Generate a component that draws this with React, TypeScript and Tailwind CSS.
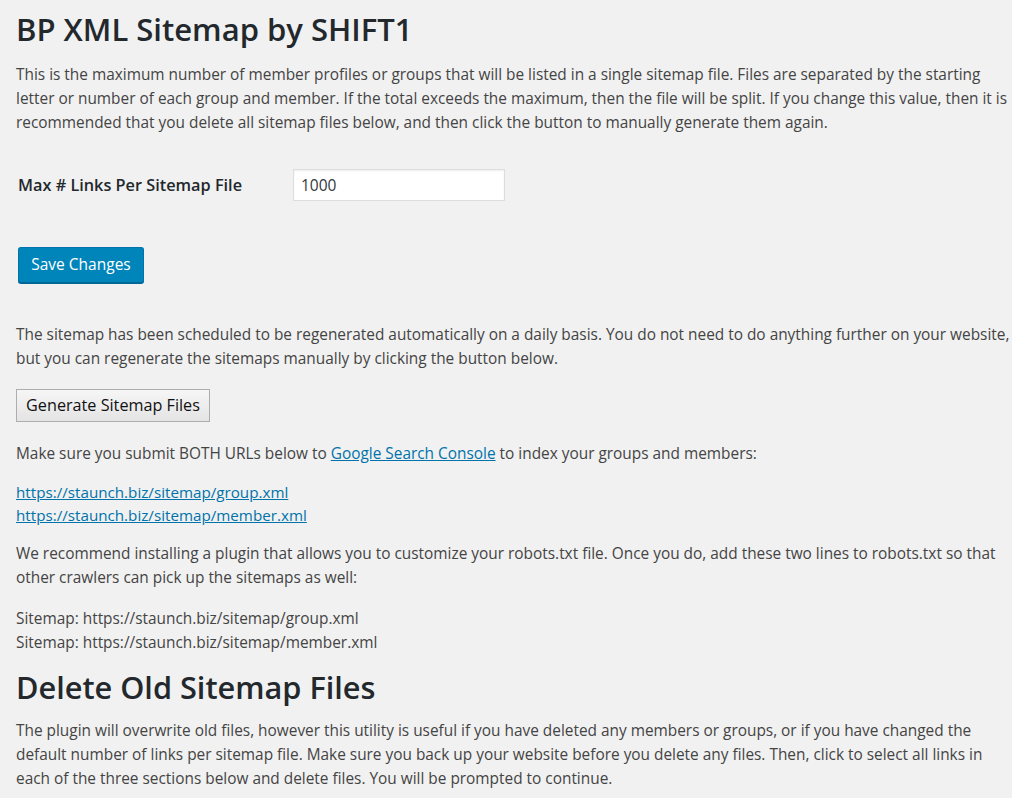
export default function App() {
  const body = "text-[#444] text-[15.4px] leading-[24px] whitespace-nowrap"
  return (
    <div className="min-h-screen overflow-hidden bg-[#f1f1f1] pl-4 pt-[7px] font-['Open_Sans',sans-serif]">
      <h1 className="text-[31px] leading-[44px] font-semibold text-[#23282d]">BP XML Sitemap by SHIFT1</h1>

      <p className={`${body} mt-3`}>
        This is the maximum number of member profiles or groups that will be listed in a single sitemap file. Files are
        separated by the starting
        <br />
        letter or number of each group and member. If the total exceeds the maximum, then the file will be split. If you
        change this value, then it is
        <br />
        recommended that you delete all sitemap files below, and then click the button to manually generate them again.
      </p>

      <div className="mt-[34px] flex items-center pl-[2px]">
        <label className="w-[275px] text-[16.3px] font-semibold text-[#23282d]">Max # Links Per Sitemap File</label>
        <input
          defaultValue="1000"
          className="h-[32px] w-[212px] border border-[#ddd] bg-white px-[7px] text-[15.5px] text-[#32373c] shadow-[inset_0_1px_2px_rgba(0,0,0,0.07)] outline-none"
        />
      </div>

      <div className="mt-[46px] pl-[2px]">
        <button className="h-[36px] w-[126px] rounded-[3px] border border-[#0073aa] border-b-[#006799] bg-[#0085ba] text-[15.5px] text-white shadow-[0_1px_0_#006799]">
          Save Changes
        </button>
      </div>

      <p className={`${body} mt-10`}>
        The sitemap has been scheduled to be regenerated automatically on a daily basis. You do not need to do anything
        further on your website,
        <br />
        but you can regenerate the sitemaps manually by clicking the button below.
      </p>

      <button className="mt-[18px] h-[33px] w-[194px] border border-[#adadad] bg-gradient-to-b from-[#f6f6f6] to-[#e4e4e4] text-[16.2px] text-[#111]">
        Generate Sitemap Files
      </button>

      <p className={`${body} mt-5`}>
        Make sure you submit BOTH URLs below to{" "}
        <a href="#" className="text-[#0073aa] underline">Google Search Console</a> to index your groups and members:
      </p>

      <div className="mt-[15px] flex flex-col text-[15.2px] leading-[23px]">
        <a href="#" className="w-fit text-[#0073aa] underline">https://staunch.biz/sitemap/group.xml</a>
        <a href="#" className="w-fit text-[#0073aa] underline">https://staunch.biz/sitemap/member.xml</a>
      </div>

      <p className={`${body} mt-[15px]`}>
        We recommend installing a plugin that allows you to customize your robots.txt file. Once you do, add these two
        lines to robots.txt so that
        <br />
        other crawlers can pick up the sitemaps as well:
      </p>

      <p className={`${body} mt-[17px]`}>
        Sitemap: https://staunch.biz/sitemap/group.xml
        <br />
        Sitemap: https://staunch.biz/sitemap/member.xml
      </p>

      <h2 className="mt-[12px] text-[30.7px] leading-[40px] font-semibold text-[#23282d]">Delete Old Sitemap Files</h2>

      <p className={`${body} mt-3`}>
        The plugin will overwrite old files, however this utility is useful if you have deleted any members or groups, or
        if you have changed the
        <br />
        default number of links per sitemap file. Make sure you back up your website before you delete any files. Then,
        click to select all links in
        <br />
        each of the three sections below and delete files. You will be prompted to continue.
      </p>
    </div>
  )
}
